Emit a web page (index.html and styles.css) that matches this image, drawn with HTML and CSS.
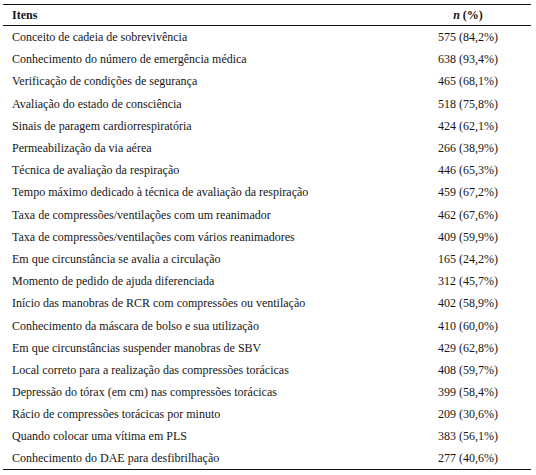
FILE: index.html
```html
<!DOCTYPE html>
<html lang="pt">
<head>
    <meta charset="UTF-8">
    <link rel="stylesheet" href="styles.css">
    <title>Itens</title>
</head>
<body>
    <table class="tabela">
        <thead>
            <tr>
                <th class="col_item">Itens</th>
                <th class="col_n"><i>n</i> (%)</th>
            </tr>
        </thead>
        <tbody>
            <tr><td>Conceito de cadeia de sobrevivência</td><td class="num">575 (84,2%)</td></tr>
            <tr><td>Conhecimento do número de emergência médica</td><td class="num">638 (93,4%)</td></tr>
            <tr><td>Verificação de condições de segurança</td><td class="num">465 (68,1%)</td></tr>
            <tr><td>Avaliação do estado de consciência</td><td class="num">518 (75,8%)</td></tr>
            <tr><td>Sinais de paragem cardiorrespiratória</td><td class="num">424 (62,1%)</td></tr>
            <tr><td>Permeabilização da via aérea</td><td class="num">266 (38,9%)</td></tr>
            <tr><td>Técnica de avaliação da respiração</td><td class="num">446 (65,3%)</td></tr>
            <tr><td>Tempo máximo dedicado à técnica de avaliação da respiração</td><td class="num">459 (67,2%)</td></tr>
            <tr><td>Taxa de compressões/ventilações com um reanimador</td><td class="num">462 (67,6%)</td></tr>
            <tr><td>Taxa de compressões/ventilações com vários reanimadores</td><td class="num">409 (59,9%)</td></tr>
            <tr><td>Em que circunstância se avalia a circulação</td><td class="num">165 (24,2%)</td></tr>
            <tr><td>Momento de pedido de ajuda diferenciada</td><td class="num">312 (45,7%)</td></tr>
            <tr><td>Início das manobras de RCR com compressões ou ventilação</td><td class="num">402 (58,9%)</td></tr>
            <tr><td>Conhecimento da máscara de bolso e sua utilização</td><td class="num">410 (60,0%)</td></tr>
            <tr><td>Em que circunstâncias suspender manobras de SBV</td><td class="num">429 (62,8%)</td></tr>
            <tr><td>Local correto para a realização das compressões torácicas</td><td class="num">408 (59,7%)</td></tr>
            <tr><td>Depressão do tórax (em cm) nas compressões torácicas</td><td class="num">399 (58,4%)</td></tr>
            <tr><td>Rácio de compressões torácicas por minuto</td><td class="num">209 (30,6%)</td></tr>
            <tr><td>Quando colocar uma vítima em PLS</td><td class="num">383 (56,1%)</td></tr>
            <tr><td>Conhecimento do DAE para desfibrilhação</td><td class="num">277 (40,6%)</td></tr>
        </tbody>
    </table>
</body>
</html>
```

FILE: styles.css
```css
* {
    margin: 0;
    padding: 0;
    box-sizing: border-box;
}
body {
    background: #fff;
    padding: 4px 5px 0 3px;
    color: #161616;
}
.tabela, .tabela th, .tabela td {
    font-family: "Liberation Serif", "Times New Roman", "DejaVu Serif", serif;
}
.tabela {
    width: 528px;
    border-collapse: collapse;
    font-size: 12px;
}
.tabela thead tr {
    border-top: 1px solid #111;
    border-bottom: 1px solid #111;
}
.tabela tbody tr:last-child {
    border-bottom: 1px solid #111;
}
.tabela th {
    height: 21px;
    padding-top: 1px;
    font-weight: bold;
    text-align: left;
    vertical-align: middle;
}
.col_item {
    padding-left: 9px;
}
.col_n {
    width: 100px;
    padding-right: 26px;
    text-align: center !important;
}
.tabela td {
    height: 22.2px;
    padding-left: 9px;
    padding-top: 2px;
    vertical-align: middle;
    white-space: nowrap;
}
.tabela td.num {
    text-align: center;
    padding-left: 0;
    padding-right: 26px;
}
```
